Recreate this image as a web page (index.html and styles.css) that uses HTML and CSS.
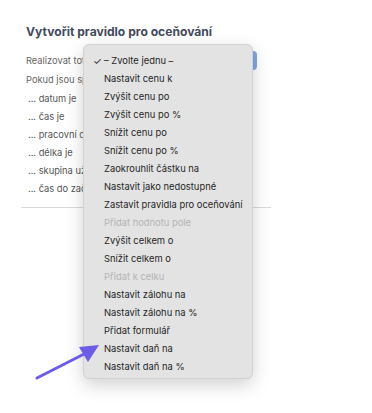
FILE: index.html
```html
<!DOCTYPE html>
<html lang="cs">
<head>
    <meta charset="UTF-8">
    <meta name="viewport" content="width=device-width, initial-scale=1.0">
    <title>Vytvořit pravidlo pro oceňování</title>
    <link rel="stylesheet" href="styles.css">
</head>
<body>
    <div class="rule-panel">
        <h1 class="rule-title">Vytvořit pravidlo pro oceňování</h1>
        <div class="form-row">
            <span class="form-label">Realizovat toto</span>
            <div class="fake-select"><span class="fake-select-arrow"></span></div>
        </div>
        <p class="cond-head">Pokud jsou splněny podmínky</p>
        <ul class="cond-list">
            <li>... datum je</li>
            <li>... čas je</li>
            <li>... pracovní den je</li>
            <li>... délka je</li>
            <li>... skupina uživatelů je</li>
            <li>... čas do začátku je</li>
        </ul>
        <hr class="divider">
    </div>

    <ul class="popup-menu">
        <li class="checked">– Zvolte jednu –</li>
        <li>Nastavit cenu k</li>
        <li>Zvýšit cenu po</li>
        <li>Zvýšit cenu po %</li>
        <li>Snížit cenu po</li>
        <li>Snížit cenu po %</li>
        <li>Zaokrouhlit částku na</li>
        <li>Nastavit jako nedostupné</li>
        <li>Zastavit pravidla pro oceňování</li>
        <li class="disabled">Přidat hodnotu pole</li>
        <li>Zvýšit celkem o</li>
        <li>Snížit celkem o</li>
        <li class="disabled">Přidat k celku</li>
        <li>Nastavit zálohu na</li>
        <li>Nastavit zálohu na %</li>
        <li>Přidat formulář</li>
        <li>Nastavit daň na</li>
        <li>Nastavit daň na %</li>
    </ul>

    <svg class="pointer-arrow" width="80" height="50" viewBox="0 0 80 50">
        <line x1="4" y1="44" x2="55" y2="18" stroke="#6c5ce7" stroke-width="3" stroke-linecap="round"/>
        <polygon points="66,11 46,13 55,28" fill="#6c5ce7"/>
    </svg>
</body>
</html>
```

FILE: styles.css
```css
body {
    margin: 0;
    background: #fff;
    font-family: Inter, "Noto Sans", sans-serif;
    width: 372px;
    height: 413px;
    position: relative;
    overflow: hidden;
}

.rule-panel {
    width: 250px;
    padding: 24px 0 0 21px;
}

.rule-title {
    margin: 0;
    padding-left: 5px;
    font-size: 12.1px;
    font-weight: 700;
    color: #444b5c;
    line-height: 16px;
}

.form-row {
    display: flex;
    align-items: center;
    margin: 11px 0 0 5px;
    height: 19px;
}

.form-label {
    font-size: 9.3px;
    color: #666;
    width: 57px;
    white-space: nowrap;
    overflow: hidden;
}

.fake-select {
    width: 174px;
    height: 19px;
    background: #f4f4f4;
    border-radius: 4px;
    position: relative;
}

.fake-select-arrow {
    position: absolute;
    right: 0;
    top: 0;
    width: 16px;
    height: 19px;
    background: #7ea6ea;
    border-radius: 0 4px 4px 0;
}

.cond-head {
    margin: 1px 0 0 5px;
    font-size: 9.3px;
    color: #666;
    line-height: 18px;
    width: 57px;
    white-space: nowrap;
    overflow: hidden;
}

.cond-list {
    list-style: none;
    margin: 0;
    padding: 1px 0 0 7px;
}

.cond-list li {
    font-size: 9.3px;
    color: #555;
    line-height: 18px;
    width: 55px;
    white-space: nowrap;
    overflow: hidden;
}

.divider {
    border: none;
    border-top: 1px solid #d9d9d9;
    margin: 9px 0 0 0;
}

.popup-menu {
    position: absolute;
    left: 83px;
    top: 44px;
    width: 170px;
    height: 335px;
    margin: 0;
    padding: 7px 0 3px 0;
    list-style: none;
    background: #e3e3e3;
    border: 1px solid #d2d2d2;
    border-radius: 6px;
    box-shadow: 0 6px 18px rgba(0, 0, 0, 0.18);
    box-sizing: border-box;
}

.popup-menu li {
    font-size: 9.4px;
    line-height: 18px;
    color: #262626;
    padding-left: 20px;
    position: relative;
}

.popup-menu li.checked::before {
    content: "✓";
    position: absolute;
    left: 9px;
    font-size: 10px;
}

.popup-menu li.disabled {
    color: #b3b3b3;
}

.pointer-arrow {
    position: absolute;
    left: 33px;
    top: 334px;
}
```
